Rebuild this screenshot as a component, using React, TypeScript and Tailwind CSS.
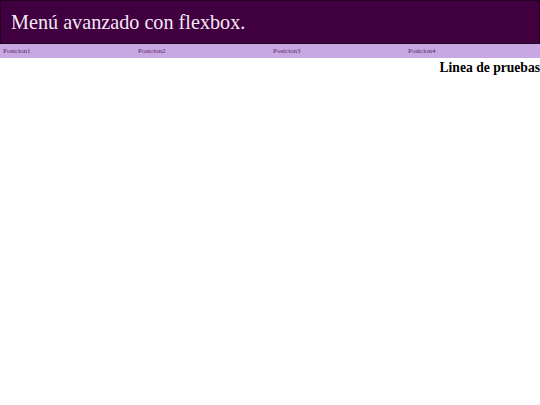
export default function App() {
  const items = ["Posicion1", "Posicion2", "Posicion3", "Posicion4"];
  return (
    <div className="w-[540px] h-[405px] bg-white" style={{ fontFamily: '"Liberation Serif", serif' }}>
      <header className="h-[44px] bg-[#400040] border border-[#250025] flex items-center pl-[10px]">
        <h1 className="text-[20.2px] leading-none text-[#f4e8f4] font-normal pt-[1px]">Menú avanzado con flexbox.</h1>
      </header>
      <nav className="h-[14px] bg-[#c8a8e3] flex items-center">
        {items.map((t) => (
          <div key={t} className="flex-1 pl-[3px] text-[7px] leading-none text-[#5a2a5a]">{t}</div>
        ))}
      </nav>
      <div className="text-right text-[13.6px] font-bold leading-[18px] pt-[1px] text-black">Linea de pruebas</div>
    </div>
  );
}
